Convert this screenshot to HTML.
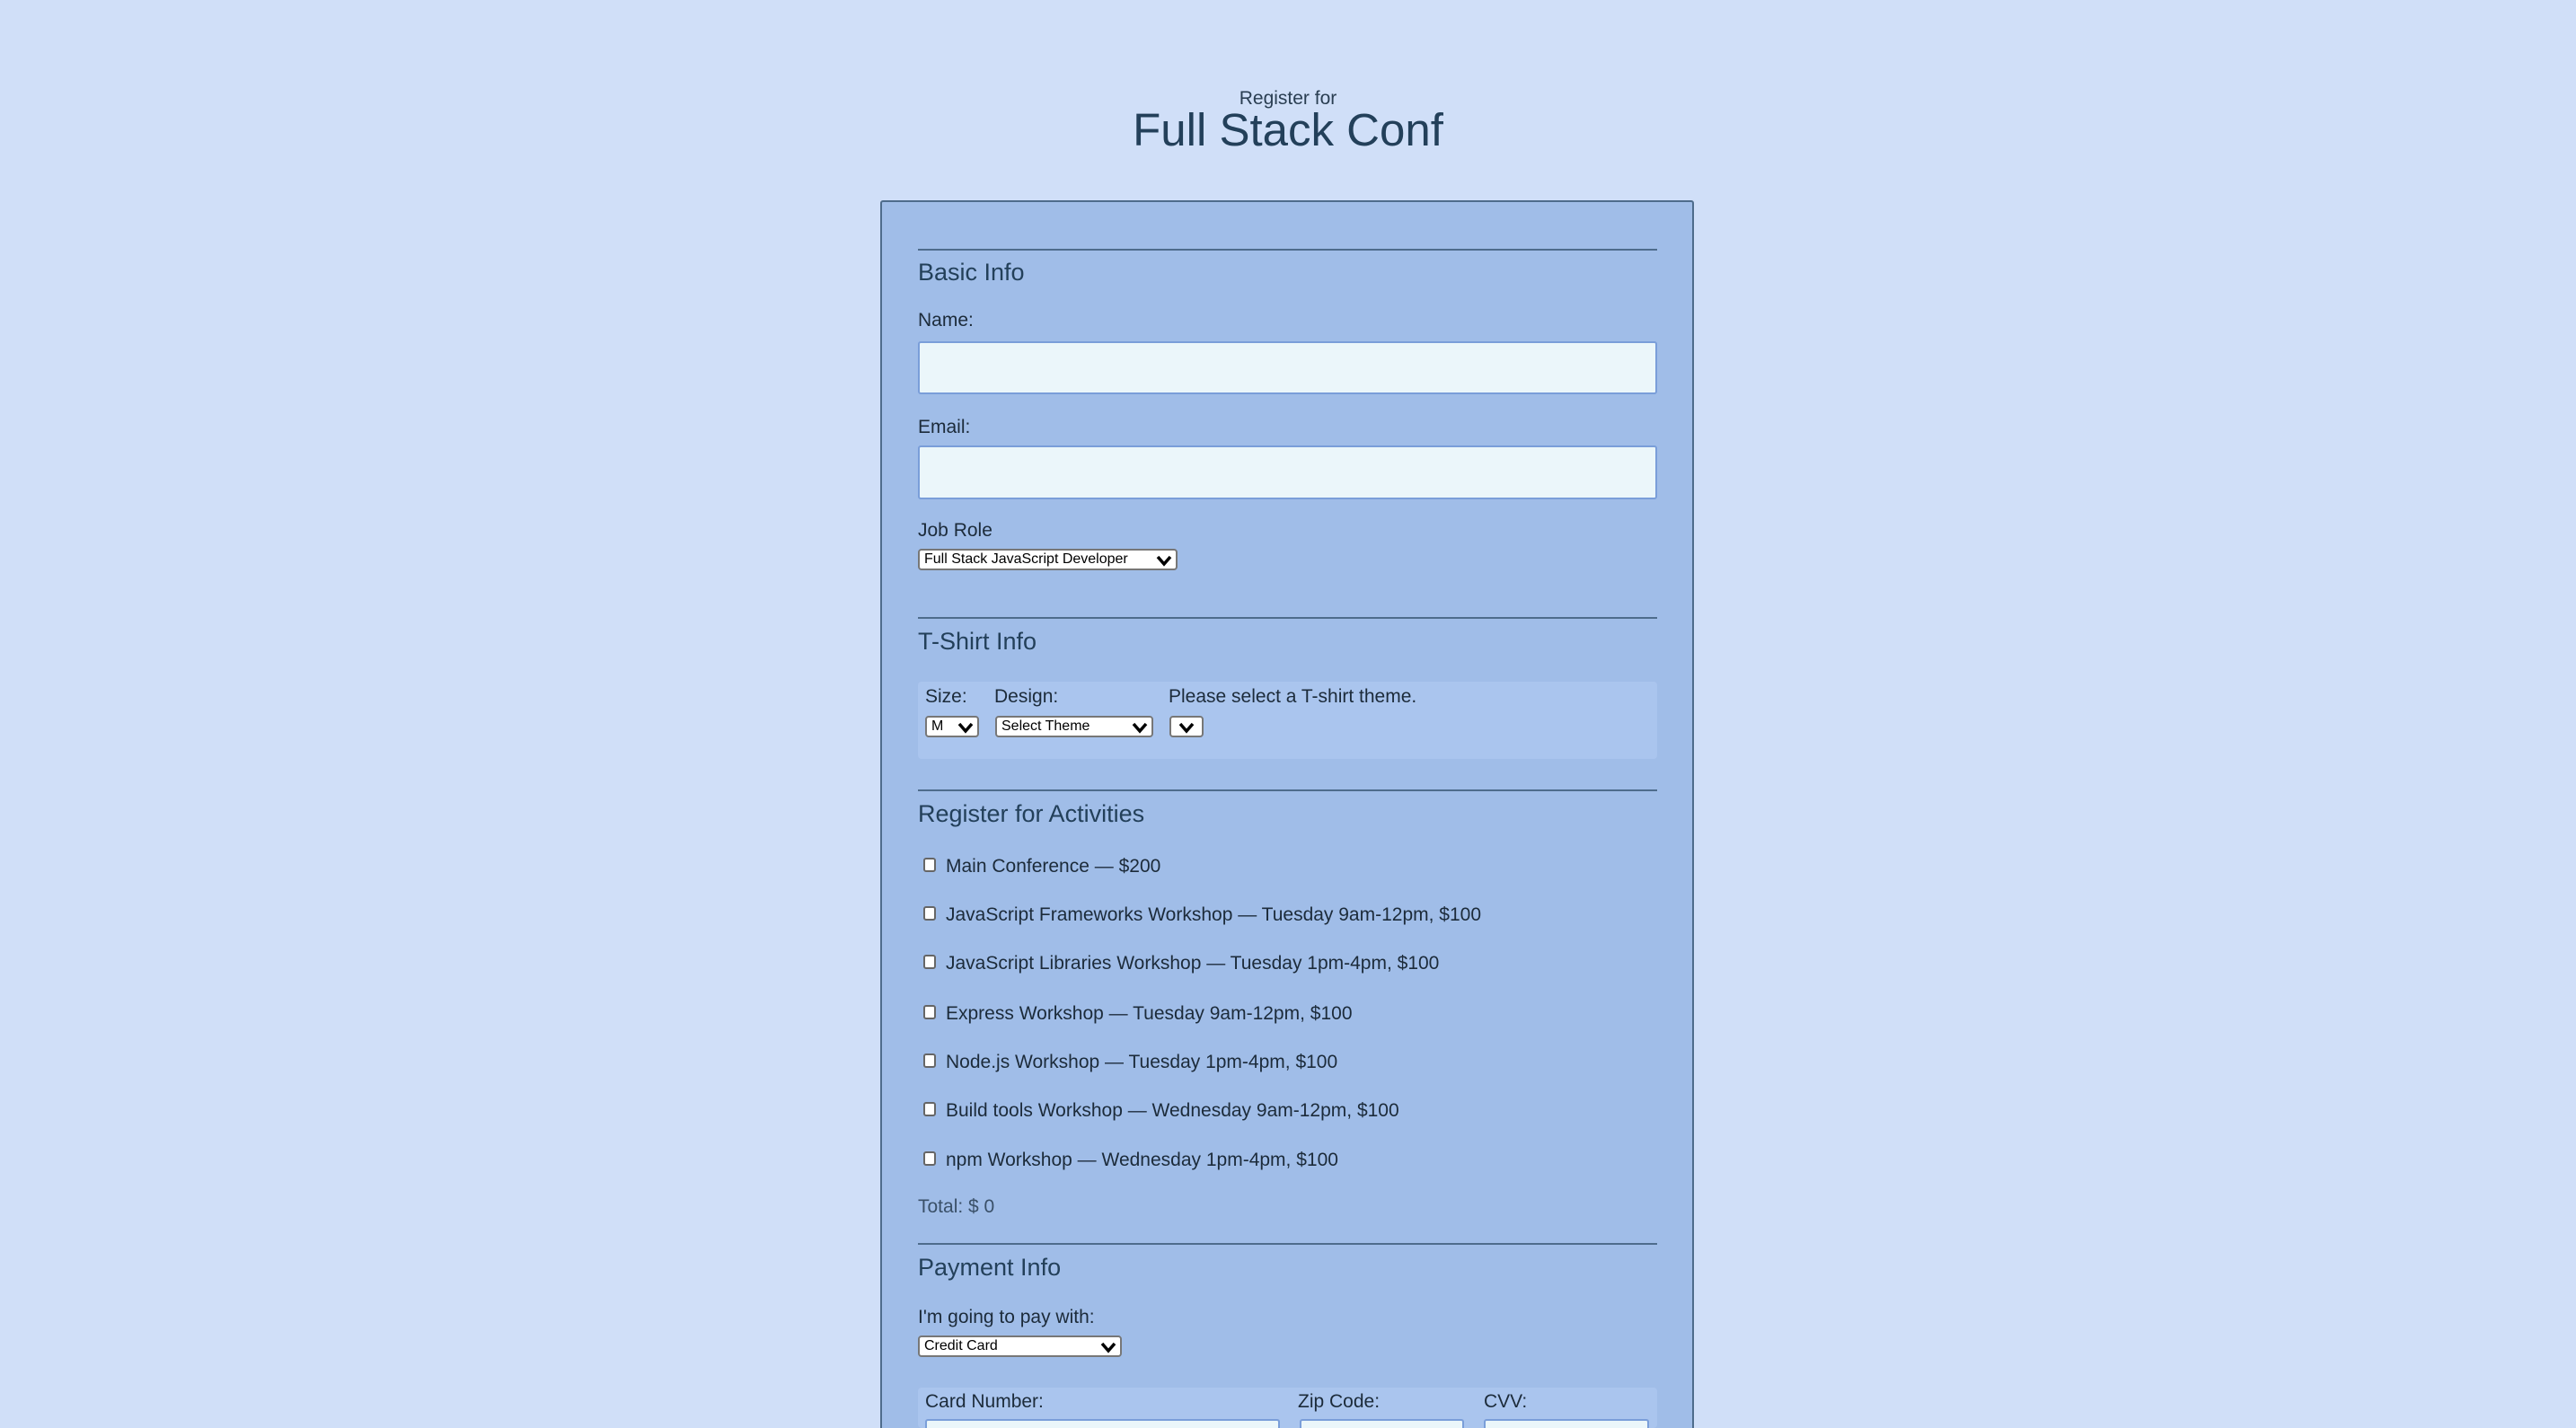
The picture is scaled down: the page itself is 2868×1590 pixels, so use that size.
<!DOCTYPE html>
<html style="overflow:hidden;width:2868px;height:1590px"><head><meta charset="utf-8"><style>
*{margin:0;padding:0;box-sizing:border-box}
body{width:2868px;height:1590px;background:#d0dff8;position:relative;overflow:hidden;font-family:"Liberation Sans",sans-serif;color:#1c2b3a}
.a{position:absolute;white-space:nowrap}
.t{line-height:1}
.h{font-size:27px;color:#23405a}
.l{font-size:21px}
.hr{position:absolute;left:1022px;width:823px;height:2px;background:#4e6c8c}
.in{position:absolute;background:#ebf6fa;border:2px solid #7a9ed9;border-radius:3px}
.sel{position:absolute;background:#fff;border:2px solid #777;border-radius:4px;font-size:16px;line-height:20px;padding-left:5px;color:#000}
.sel svg{position:absolute;right:4px;top:4px}
.box{position:absolute;background:#aac5ee;border-radius:4px}
.cb{position:absolute;width:14px;height:16px;border:2px solid #666;border-radius:3px;background:#fff}
</style></head><body>
<div class="a t" style="left:0;width:2868px;text-align:center;top:99px;font-size:21px;color:#2a3e52">Register for</div>
<div class="a t" style="left:0;width:2868px;text-align:center;top:119px;font-size:51px;color:#23405a">Full Stack Conf</div>

<div style="position:absolute;left:980px;top:223px;width:906px;height:1380px;background:#a0bde8;border:2px solid #4e6c8c;border-radius:3px"></div>

<div class="hr" style="top:277px"></div>
<div class="a t h" style="left:1022px;top:290px">Basic Info</div>
<div class="a t l" style="left:1022px;top:346px">Name:</div>
<div class="in" style="left:1022px;top:380px;width:823px;height:59px"></div>
<div class="a t l" style="left:1022px;top:465px">Email:</div>
<div class="in" style="left:1022px;top:496px;width:823px;height:60px"></div>
<div class="a t l" style="left:1022px;top:580px">Job Role</div>
<div class="sel" style="left:1022px;top:611px;width:289px;height:24px">Full Stack JavaScript Developer<svg width="18" height="14" viewBox="0 0 18 14"><path d="M2 3 L9 11 L16 3" stroke="#000" stroke-width="3.5" fill="none"/></svg></div>

<div class="hr" style="top:687px"></div>
<div class="a t h" style="left:1022px;top:701px">T-Shirt Info</div>
<div class="box" style="left:1022px;top:759px;width:823px;height:86px"></div>
<div class="a t l" style="left:1030px;top:765px">Size:</div>
<div class="a t l" style="left:1107px;top:765px">Design:</div>
<div class="a t l" style="left:1301px;top:765px">Please select a T-shirt theme.</div>
<div class="sel" style="left:1030px;top:797px;width:60px;height:24px">M<svg width="18" height="14" viewBox="0 0 18 14"><path d="M2 3 L9 11 L16 3" stroke="#000" stroke-width="3.5" fill="none"/></svg></div>
<div class="sel" style="left:1108px;top:797px;width:176px;height:24px">Select Theme<svg width="18" height="14" viewBox="0 0 18 14"><path d="M2 3 L9 11 L16 3" stroke="#000" stroke-width="3.5" fill="none"/></svg></div>
<div class="sel" style="left:1302px;top:797px;width:38px;height:24px"><svg width="18" height="14" viewBox="0 0 18 14" style="right:8px"><path d="M2 3 L9 11 L16 3" stroke="#000" stroke-width="3.5" fill="none"/></svg></div>

<div class="hr" style="top:879px"></div>
<div class="a t h" style="left:1022px;top:893px">Register for Activities</div>

<div class="cb" style="left:1028px;top:955px"></div><div class="a t l" style="left:1053px;top:954px">Main Conference — $200</div>
<div class="cb" style="left:1028px;top:1009px"></div><div class="a t l" style="left:1053px;top:1008px">JavaScript Frameworks Workshop — Tuesday 9am-12pm, $100</div>
<div class="cb" style="left:1028px;top:1063px"></div><div class="a t l" style="left:1053px;top:1062px">JavaScript Libraries Workshop — Tuesday 1pm-4pm, $100</div>
<div class="cb" style="left:1028px;top:1119px"></div><div class="a t l" style="left:1053px;top:1118px">Express Workshop — Tuesday 9am-12pm, $100</div>
<div class="cb" style="left:1028px;top:1173px"></div><div class="a t l" style="left:1053px;top:1172px">Node.js Workshop — Tuesday 1pm-4pm, $100</div>
<div class="cb" style="left:1028px;top:1227px"></div><div class="a t l" style="left:1053px;top:1226px">Build tools Workshop — Wednesday 9am-12pm, $100</div>
<div class="cb" style="left:1028px;top:1282px"></div><div class="a t l" style="left:1053px;top:1281px">npm Workshop — Wednesday 1pm-4pm, $100</div>
<div class="a t l" style="left:1022px;top:1333px;color:#3a5068">Total: $ 0</div>

<div class="hr" style="top:1384px"></div>
<div class="a t h" style="left:1022px;top:1398px">Payment Info</div>
<div class="a t l" style="left:1022px;top:1456px">I'm going to pay with:</div>
<div class="sel" style="left:1022px;top:1487px;width:227px;height:24px">Credit Card<svg width="18" height="14" viewBox="0 0 18 14"><path d="M2 3 L9 11 L16 3" stroke="#000" stroke-width="3.5" fill="none"/></svg></div>

<div class="box" style="left:1022px;top:1545px;width:823px;height:45px"></div>
<div class="a t l" style="left:1030px;top:1550px">Card Number:</div>
<div class="a t l" style="left:1445px;top:1550px">Zip Code:</div>
<div class="a t l" style="left:1652px;top:1550px">CVV:</div>
<div class="in" style="left:1030px;top:1580px;width:395px;height:10px;border-bottom:none;border-radius:3px 3px 0 0"></div>
<div class="in" style="left:1447px;top:1580px;width:183px;height:10px;border-bottom:none;border-radius:3px 3px 0 0"></div>
<div class="in" style="left:1652px;top:1580px;width:184px;height:10px;border-bottom:none;border-radius:3px 3px 0 0"></div>
</body></html>
